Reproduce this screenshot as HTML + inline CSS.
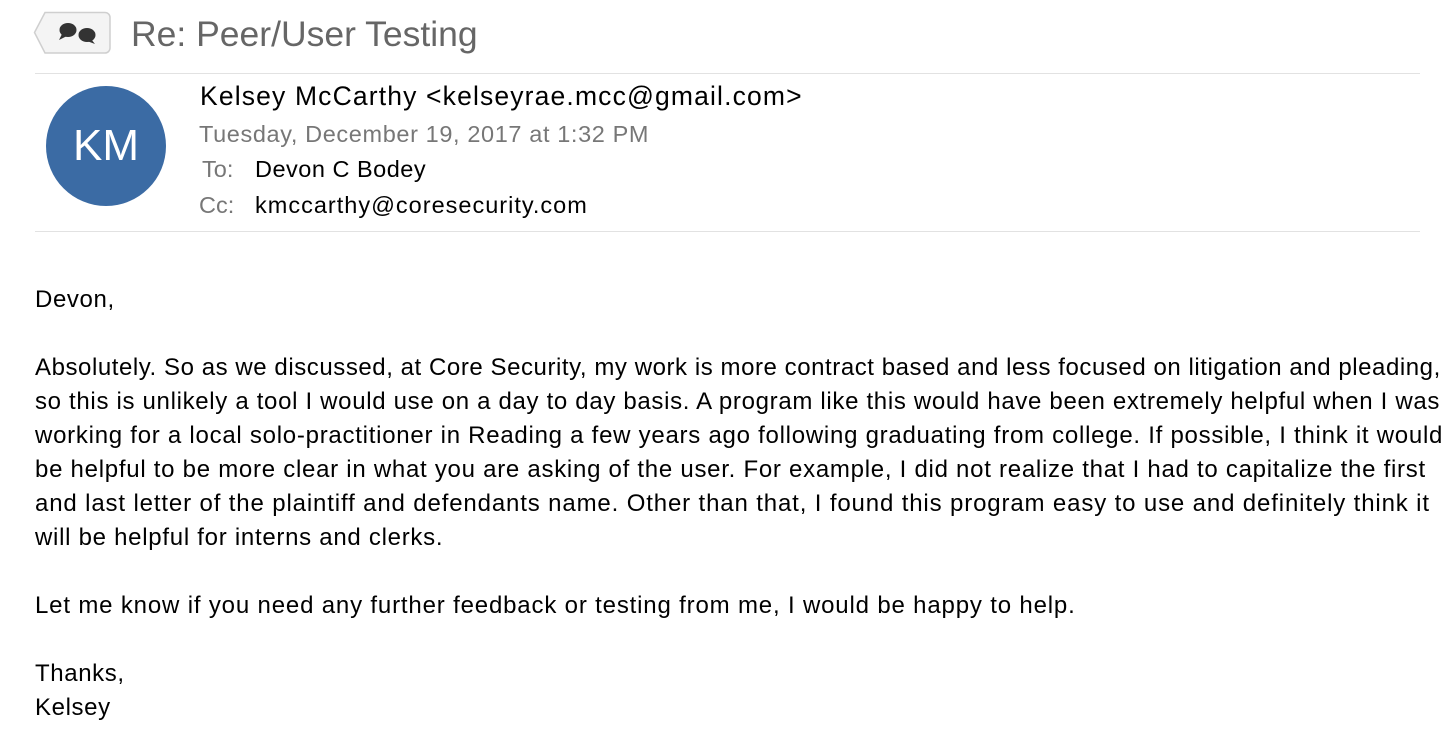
<!DOCTYPE html>
<html><head><meta charset="utf-8"><style>
body{margin:0;width:1456px;height:752px;background:#fff;font-family:"Liberation Sans",sans-serif;position:relative;overflow:hidden}
.a{position:absolute;white-space:nowrap}
.hr{position:absolute;left:35px;width:1385px;height:1px;background:#e2e2e2}
.b{font-size:24px;color:#000;left:35px;letter-spacing:0.62px}
</style></head><body>
<svg class="a" style="left:33px;top:11px" width="80" height="44">
<path d="M12 1.5 H72 a5 5 0 0 1 5 5 V37 a5 5 0 0 1 -5 5 H12 L1.5 21.5 Z" fill="#f4f4f4" stroke="#cfcfcf" stroke-width="1.5"/>
<ellipse cx="35" cy="19" rx="8.5" ry="7" fill="#333"/><path d="M29 23 l-3 6 l8 -4z" fill="#333"/>
<ellipse cx="54" cy="24" rx="8.5" ry="7" fill="#333"/><path d="M58 28 l4 5 l-8 -3z" fill="#333"/>
</svg>
<div class="a" style="left:131px;top:14px;font-size:35.5px;color:#666">Re: Peer/User Testing</div>
<div class="hr" style="top:73px"></div>
<div class="a" style="left:46px;top:86px;width:120px;height:120px;border-radius:50%;background:#3b6ba4;color:#fff;font-size:44px;line-height:120px;text-align:center">KM</div>
<div class="a" style="left:200px;top:81px;font-size:26.5px;color:#000;letter-spacing:1.15px">Kelsey McCarthy &lt;kelseyrae.mcc@gmail.com&gt;</div>
<div class="a" style="left:199px;top:121px;font-size:23.5px;color:#777;letter-spacing:0.62px">Tuesday, December 19, 2017 at 1:32 PM</div>
<div class="a" style="left:202px;top:156px;font-size:23.5px;color:#777">To:</div>
<div class="a" style="left:255px;top:156px;font-size:23.5px;color:#000;letter-spacing:0.5px">Devon C Bodey</div>
<div class="a" style="left:199px;top:192px;font-size:23.5px;color:#777">Cc:</div>
<div class="a" style="left:255px;top:192px;font-size:23.5px;color:#000;letter-spacing:1.0px">kmccarthy@coresecurity.com</div>
<div class="hr" style="top:231px"></div>
<div class="a b" style="top:286px">Devon,</div>
<div class="a b" style="top:354px;letter-spacing:0.56px">Absolutely. So as we discussed, at Core Security, my work is more contract based and less focused on litigation and pleading,</div>
<div class="a b" style="top:388px;letter-spacing:0.68px">so this is unlikely a tool I would use on a day to day basis. A program like this would have been extremely helpful when I was</div>
<div class="a b" style="top:422px;letter-spacing:0.74px">working for a local solo-practitioner in Reading a few years ago following graduating from college. If possible, I think it would</div>
<div class="a b" style="top:456px;letter-spacing:0.73px">be helpful to be more clear in what you are asking of the user. For example, I did not realize that I had to capitalize the first</div>
<div class="a b" style="top:490px;letter-spacing:0.86px">and last letter of the plaintiff and defendants name. Other than that, I found this program easy to use and definitely think it</div>
<div class="a b" style="top:524px;letter-spacing:0.72px">will be helpful for interns and clerks.</div>
<div class="a b" style="top:592px;letter-spacing:0.83px">Let me know if you need any further feedback or testing from me, I would be happy to help.</div>
<div class="a b" style="top:660px">Thanks,</div>
<div class="a b" style="top:694px">Kelsey</div>
</body></html>
